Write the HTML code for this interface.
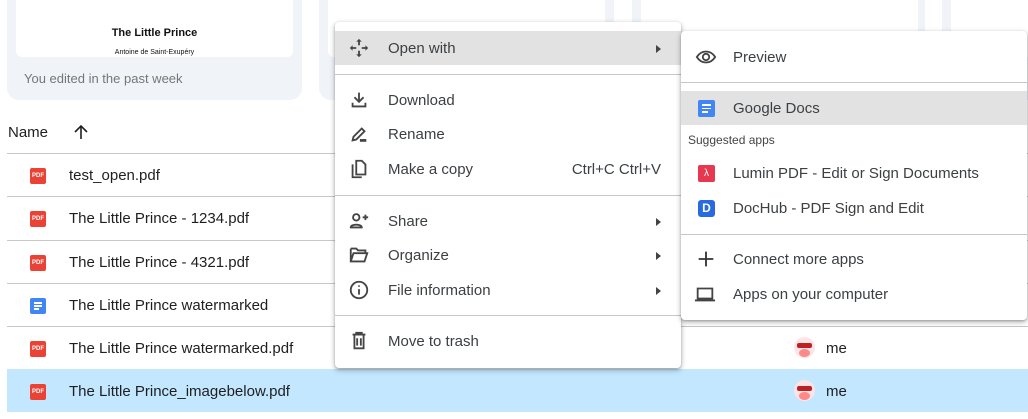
<!DOCTYPE html>
<html><head><style>
*{margin:0;padding:0;box-sizing:border-box}
body{width:1028px;height:419px;overflow:hidden;background:#fff;font-family:"Liberation Sans",Arial,sans-serif;position:relative;color:#1f1f1f}
.abs{position:absolute}
.card{position:absolute;top:-20px;height:120px;width:295px;background:#f0f4f9;border-radius:12px}
.card .pv{position:absolute;left:9px;top:20px;width:277px;height:57px;background:#fff;border-radius:0 0 6px 6px}
.row{position:absolute;left:7px;width:1021px;height:43px;border-top:1px solid #c7c7c7;font-size:15px}
.row .t{position:absolute;left:62px;top:13px}
.pdf{position:absolute;left:23px;top:14px;width:16px;height:16px;background:#ea4335;border-radius:2px;color:#fff;font-size:6px;font-weight:bold;line-height:16px;text-align:center}
.doc{position:absolute;width:16px;height:16px;background:#4285f4;border-radius:2px}
.doc i{position:absolute;left:4px;height:1.6px;background:#fff}
.menu{position:absolute;background:#fff;border-radius:4px;box-shadow:0 2px 6px rgba(0,0,0,.3),0 1px 2px rgba(0,0,0,.2)}
.it{position:absolute;left:0;right:0;height:34px;font-size:15px;color:#3c4043;line-height:36px}
.it .l{position:absolute;left:53px}
.m2 .it .l{left:52px}
.hl{background:#e2e2e2}
.sep{position:absolute;left:0;right:0;height:1px;background:#c7c7c7}
.ic{position:absolute;left:13px;top:6px;width:22px;height:22px}
.arr{position:absolute;right:20px;top:14px;width:0;height:0;border-left:5px solid #444;border-top:4.5px solid transparent;border-bottom:4.5px solid transparent}
.av{position:absolute;left:787px;top:10px;width:21px;height:21px;border-radius:50%;background:#fde4e8;overflow:hidden}
.av:before{content:"";position:absolute;left:3px;top:6px;width:15px;height:5px;background:#b22;border-radius:2px}
.av:after{content:"";position:absolute;left:5px;top:12px;width:11px;height:8px;background:#f88;border-radius:50%}
.me{position:absolute;left:819px;top:13px}
</style></head><body>
<div class="card" style="left:7px"><div class="pv"></div>
<div class="abs" style="left:0;width:100%;top:47px;text-align:center;font-size:11px;font-weight:bold;color:#111">The Little Prince</div>
<div class="abs" style="left:0;width:100%;top:69px;text-align:center;font-size:7px;color:#111">Antoine de Saint-Exupéry</div>
<div class="abs" style="left:17px;top:91px;font-size:13px;color:#747775">You edited in the past week</div></div>
<div class="card" style="left:319px"><div class="pv"></div></div>
<div class="card" style="left:632px;width:293px"><div class="pv"></div></div>
<div class="card" style="left:942px"><div class="pv"></div></div>
<div class="abs" style="left:8px;top:124px;font-size:15px">Name</div>
<svg class="abs" style="left:73px;top:125px" width="16" height="14" viewBox="0 0 16 14" fill="none" stroke="#1f1f1f" stroke-width="1.6"><path d="M8 14V1M2 7l6-6 6 6"/></svg>
<div class="row" style="top:153px"><div class="pdf">PDF</div><div class="t">test_open.pdf</div></div>
<div class="row" style="top:196px"><div class="pdf">PDF</div><div class="t">The Little Prince - 1234.pdf</div></div>
<div class="row" style="top:240px"><div class="pdf">PDF</div><div class="t">The Little Prince - 4321.pdf</div></div>
<div class="row" style="top:283px"><div class="doc" style="left:23px;top:14px"><i style="top:4px;width:8px"></i><i style="top:7px;width:8px"></i><i style="top:10px;width:5px"></i></div><div class="t">The Little Prince watermarked</div></div>
<div class="row" style="top:326px"><div class="pdf">PDF</div><div class="t">The Little Prince watermarked.pdf</div><div class="av"></div><div class="me">me</div></div>
<div class="row" style="top:369px;background:#c2e7ff;border-top-color:#c2e7ff"><div class="pdf">PDF</div><div class="t">The Little Prince_imagebelow.pdf</div><div class="av"></div><div class="me">me</div></div>

<div class="menu" style="left:335px;top:22px;width:346px;height:346px">
<div class="it hl" style="top:9px"><svg class="ic" viewBox="0 0 24 24"><path d="M12 2l-3 3h2v4h2V5h2zM12 22l3-3h-2v-4h-2v4H9zM2 12l3 3v-2h4v-2H5V9zM22 12l-3-3v2h-4v2h4v2z" fill="#444"/></svg><span class="l">Open with</span><div class="arr"></div></div>
<div class="sep" style="top:52px"></div>
<div class="it" style="top:61px"><svg class="ic" viewBox="0 0 24 24" fill="none" stroke="#444" stroke-width="2"><path d="M12 4v10M7 9l5 5 5-5M5 15v4h14v-4"/></svg><span class="l">Download</span></div>
<div class="it" style="top:95px"><svg class="ic" viewBox="0 0 24 24" fill="none" stroke="#444" stroke-width="2"><path d="M5 19l1-4 9-9 3 3-9 9z"/><path d="M13 19h7" stroke-width="3"/></svg><span class="l">Rename</span></div>
<div class="it" style="top:130px"><svg class="ic" viewBox="0 0 24 24" fill="none" stroke="#444" stroke-width="2"><path d="M9 3h6l4 4v11H9zM5 7v14h10"/></svg><span class="l">Make a copy</span><span class="abs" style="right:20px">Ctrl+C Ctrl+V</span></div>
<div class="sep" style="top:173px"></div>
<div class="it" style="top:182px"><svg class="ic" viewBox="0 0 24 24" fill="none" stroke="#444" stroke-width="2"><circle cx="9" cy="8" r="3.5"/><path d="M3 19c0-4 12-4 12 0zM19 5v6M16 8h6"/></svg><span class="l">Share</span><div class="arr"></div></div>
<div class="it" style="top:216px"><svg class="ic" viewBox="0 0 24 24" fill="none" stroke="#444" stroke-width="2"><path d="M3 5h6l2 2h8v3M3 5v14h15l3-9H6l-3 9"/></svg><span class="l">Organize</span><div class="arr"></div></div>
<div class="it" style="top:251px"><svg class="ic" viewBox="0 0 24 24" fill="none" stroke="#444" stroke-width="2"><circle cx="12" cy="12" r="9"/><path d="M12 11v6M12 7v1.5"/></svg><span class="l">File information</span><div class="arr"></div></div>
<div class="sep" style="top:293px"></div>
<div class="it" style="top:302px"><svg class="ic" viewBox="0 0 24 24" fill="none" stroke="#444" stroke-width="2"><path d="M5 5h14M9 5V3h6v2M7 5v15h10V5M10 9v8M14 9v8"/></svg><span class="l">Move to trash</span></div>
</div>

<div class="menu m2" style="left:681px;top:31px;width:346px;height:289px">
<div class="it" style="top:9px"><svg class="ic" style="left:14px" viewBox="0 0 24 24" fill="none" stroke="#444" stroke-width="2"><path d="M2 12c5-8 15-8 20 0-5 8-15 8-20 0z"/><circle cx="12" cy="12" r="3.5"/></svg><span class="l">Preview</span></div>
<div class="sep" style="top:51px"></div>
<div class="it hl" style="top:60px"><div class="doc" style="left:17px;top:9px;width:17px;height:17px"><i style="top:4px;width:9px"></i><i style="top:7.5px;width:9px"></i><i style="top:11px;width:6px"></i></div><span class="l">Google Docs</span></div>
<div class="abs" style="left:7px;top:102px;font-size:12px;color:#444">Suggested apps</div>
<div class="it" style="top:125px"><div class="abs" style="left:17px;top:9px;width:17px;height:17px;background:#e8384f;border-radius:2px;color:#fff;font-size:10px;line-height:17px;text-align:center">&#955;</div><span class="l">Lumin PDF - Edit or Sign Documents</span></div>
<div class="it" style="top:160px"><div class="abs" style="left:17px;top:9px;width:17px;height:17px;background:#2a6ae0;border-radius:3px;color:#fff;font-size:12px;font-weight:bold;line-height:17px;text-align:center">D</div><span class="l">DocHub - PDF Sign and Edit</span></div>
<div class="sep" style="top:203px"></div>
<div class="it" style="top:211px"><svg class="ic" style="left:14px" viewBox="0 0 24 24" fill="none" stroke="#333" stroke-width="2"><path d="M12 4v16M4 12h16"/></svg><span class="l">Connect more apps</span></div>
<div class="it" style="top:246px"><svg class="ic" style="left:13px" viewBox="0 0 24 24" fill="none" stroke="#444" stroke-width="2"><path d="M4 6h16v11H4zM1 19h22"/></svg><span class="l">Apps on your computer</span></div>
</div>
</body></html>
